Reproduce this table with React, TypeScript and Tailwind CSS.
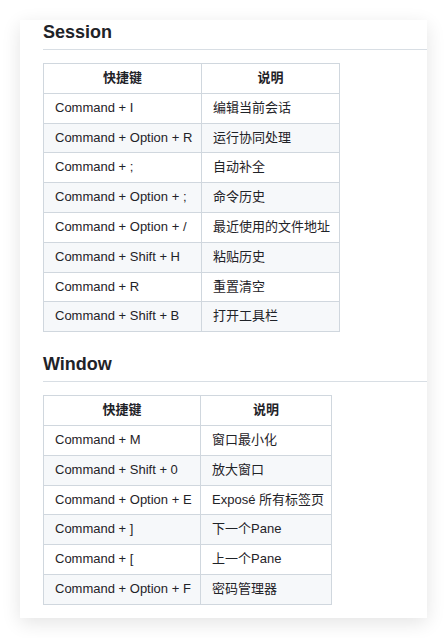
import React from "react";

type Row = [string, string];

const session: Row[] = [
  ["Command + I", "编辑当前会话"],
  ["Command + Option + R", "运行协同处理"],
  ["Command + ;", "自动补全"],
  ["Command + Option + ;", "命令历史"],
  ["Command + Option + /", "最近使用的文件地址"],
  ["Command + Shift + H", "粘贴历史"],
  ["Command + R", "重置清空"],
  ["Command + Shift + B", "打开工具栏"],
];

const windowRows: Row[] = [
  ["Command + M", "窗口最小化"],
  ["Command + Shift + 0", "放大窗口"],
  ["Command + Option + E", "Exposé 所有标签页"],
  ["Command + ]", "下一个Pane"],
  ["Command + [", "上一个Pane"],
  ["Command + Option + F", "密码管理器"],
];

function Table({ rows, w, c1 }: { rows: Row[]; w: string; c1: string }) {
  return (
    <table className={`border-collapse table-fixed text-[13px] leading-[18.8px] ${w}`}>
      <colgroup>
        <col className={c1} />
        <col />
      </colgroup>
      <thead>
        <tr className="bg-white">
          <th className="border border-[#d0d7de] px-[11px] py-[5px] font-semibold text-center">快捷键</th>
          <th className="border border-[#d0d7de] px-[11px] py-[5px] font-semibold text-center">说明</th>
        </tr>
      </thead>
      <tbody>
        {rows.map((r, i) => (
          <tr key={i} className={i % 2 === 1 ? "bg-[#f6f8fa]" : "bg-white"}>
            <td className="border border-[#d0d7de] pl-[11px] pr-0 py-[5px] whitespace-nowrap overflow-visible">{r[0]}</td>
            <td className="border border-[#d0d7de] pl-[11px] pr-0 py-[5px] whitespace-nowrap overflow-visible">{r[1]}</td>
          </tr>
        ))}
      </tbody>
    </table>
  );
}

export default function App() {
  return (
    <div
      className="w-[447px] h-[638px] bg-white pt-[20px] pl-[20px] text-[#1f2328]"
      style={{ fontFamily: '"Liberation Sans", Arial, "Noto Sans CJK SC", sans-serif' }}
    >
      <div className="w-[407px] h-[598px] bg-white shadow-[0_5px_18px_rgba(0,0,0,0.11)] pl-[23px] overflow-hidden">
        <h2 className="text-[18px] leading-[24px] font-semibold pb-[5px] border-b border-[#d8dee4]">Session</h2>
        <div className="mt-[13px]">
          <Table rows={session} w="w-[297px]" c1="w-[158px]" />
        </div>
        <h2 className="mt-[20px] text-[18px] leading-[24px] font-semibold pb-[5px] border-b border-[#d8dee4]">Window</h2>
        <div className="mt-[13px]">
          <Table rows={windowRows} w="w-[289px]" c1="w-[157px]" />
        </div>
      </div>
    </div>
  );
}
